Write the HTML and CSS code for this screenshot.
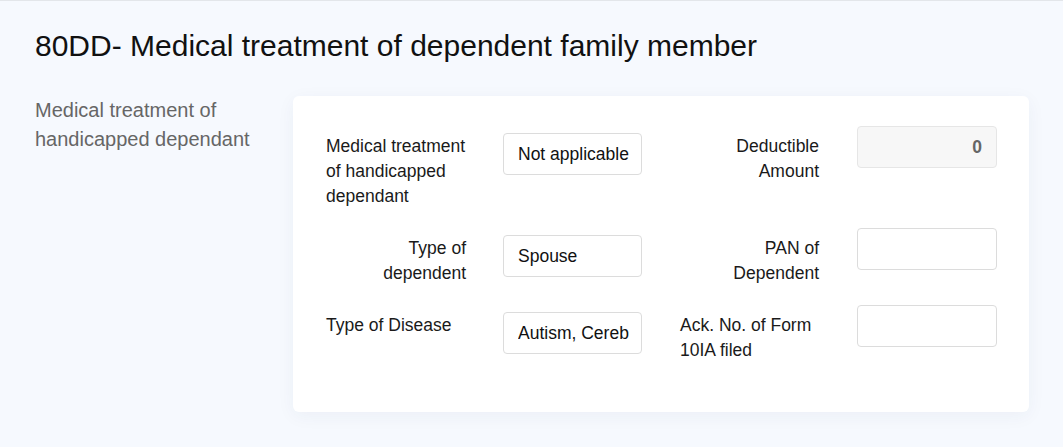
FILE: index.html
```html
<!DOCTYPE html>
<html lang="en">
<head>
    <meta charset="UTF-8">
    <meta name="viewport" content="width=device-width, initial-scale=1.0">
    <title>80DD</title>
    <link rel="stylesheet" href="styles.css">
</head>
<body>

<div class="page">
    <h2 class="title">80DD- Medical treatment of dependent family member</h2>

    <div class="section">
        <p class="section-label">Medical treatment of handicapped dependant</p>

        <!-- Form card -->
        <div class="card">
            <div class="form-grid">
                <label class="field-label">Medical treatment of handicapped dependant</label>
                <input class="field" type="text" value="Not applicable" readonly>
                <label class="field-label right">Deductible Amount</label>
                <input class="field side disabled" type="text" value="0" disabled>

                <label class="field-label right">Type of dependent</label>
                <input class="field" type="text" value="Spouse" readonly>
                <label class="field-label right">PAN of Dependent</label>
                <input class="field side" type="text">

                <label class="field-label">Type of Disease</label>
                <input class="field" type="text" value="Autism, Cerebral Palsy" readonly>
                <label class="field-label">Ack. No. of Form 10IA filed</label>
                <input class="field side" type="text">
            </div>
        </div>
    </div>
</div>

</body>
</html>
```

FILE: styles.css
```css
/* General Styling */
* {
    box-sizing: border-box;
    margin: 0;
    padding: 0;
    font-family: "Liberation Sans", Arial, sans-serif;
}

body {
    height: 100vh;
    background: #f6f9fe;
    border-top: 1px solid #e3e6ea;
    color: #1a1a1a;
    overflow: hidden;
}

.page {
    padding: 0 34px 0 35px;
}

.title {
    font-size: 30px;
    font-weight: normal;
    color: #111;
    margin-top: 28px;
    line-height: 34px;
}

.section {
    display: flex;
    margin-top: 33px;
}

.section-label {
    width: 258px;
    flex-shrink: 0;
    font-size: 20px;
    line-height: 29px;
    color: #666;
    padding-right: 30px;
}

.card {
    flex: 1;
    background: white;
    border-radius: 6px;
    box-shadow: 0 4px 18px rgba(30, 50, 90, 0.05);
    padding: 37px 32px 49px 33px;
}

.form-grid {
    display: grid;
    grid-template-columns: 140px 139px 140px 140px;
    column-gap: 37px;
    row-gap: 26px;
    align-items: start;
}

.field-label {
    font-size: 17.5px;
    line-height: 25px;
    color: #1a1a1a;
    margin-top: 1px;
}

.field-label.right {
    text-align: right;
}

.form-grid .field-label:nth-child(4n+3) {
    margin-left: 1px;
}

.field {
    width: 100%;
    height: 42px;
    padding: 0 12px 0 14px;
    border: 1px solid #dcdcdc;
    border-radius: 4px;
    background: white;
    font-size: 17.5px;
    color: #111;
    outline: none;
}

.field.side {
    margin-top: -7px;
    margin-left: 1px;
    width: 140px;
}

.field.disabled {
    padding-right: 14px;
    background: #f7f7f7;
    border-color: #e6e6e6;
    color: #666;
    font-weight: bold;
    text-align: right;
}
```
